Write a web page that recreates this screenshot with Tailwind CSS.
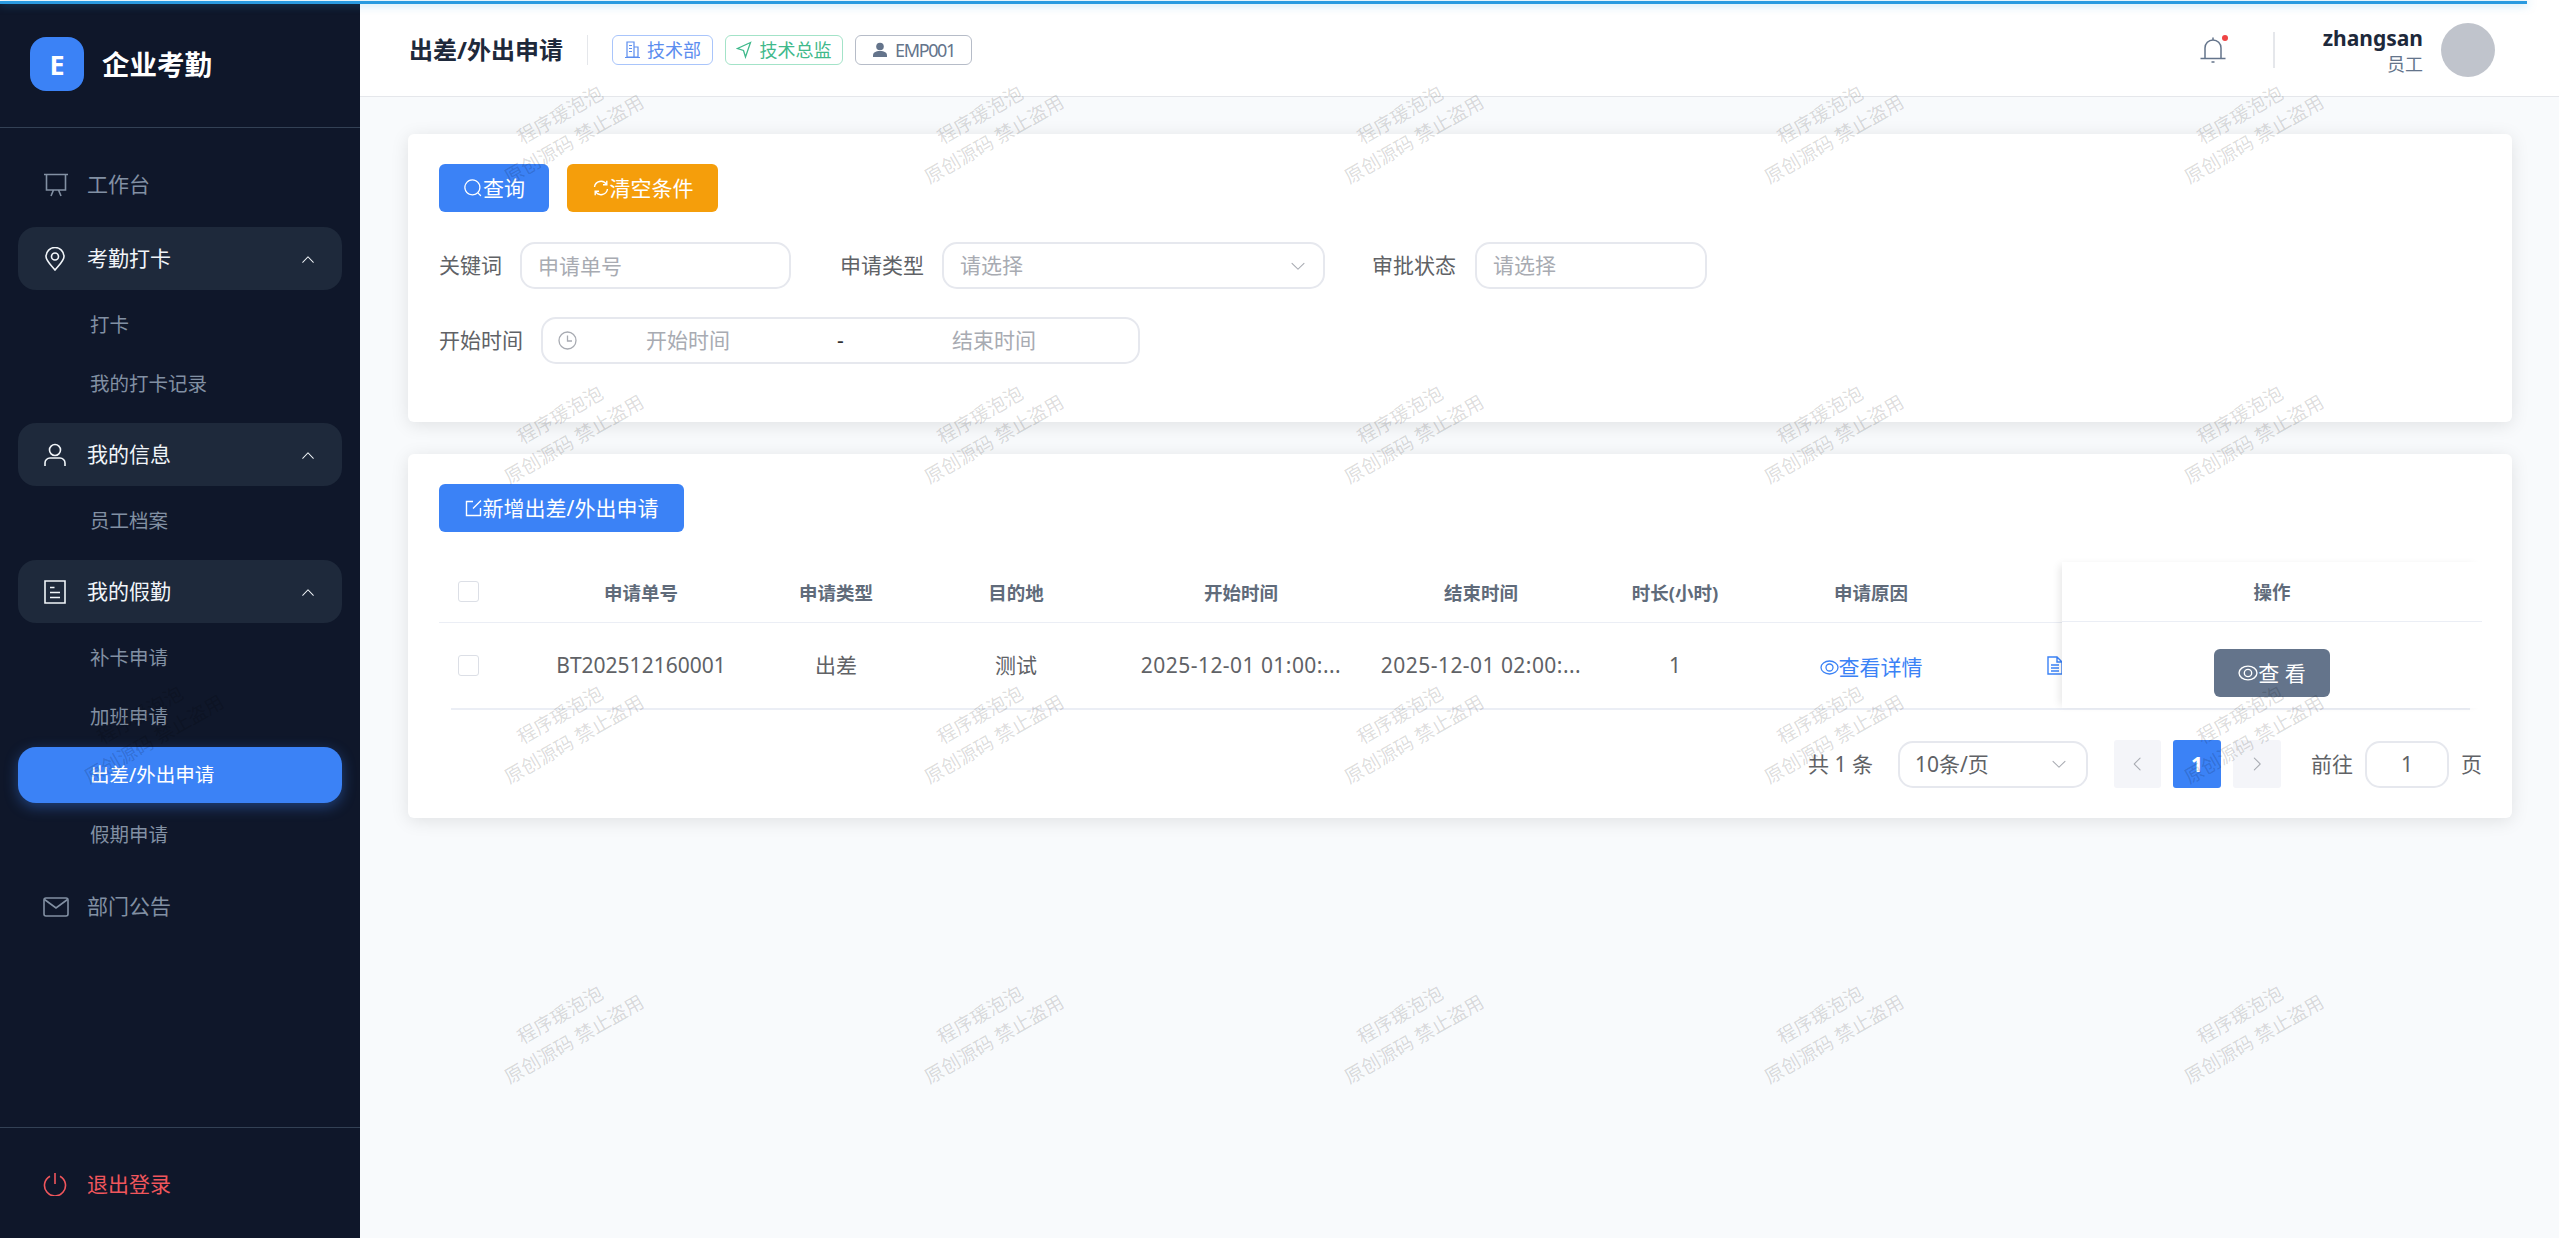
<!DOCTYPE html>
<html lang="zh-CN">
<head>
  <meta charset="UTF-8" />
  <meta name="viewport" content="width=device-width, initial-scale=1" />
  <title>出差/外出申请</title>
  <script src="https://cdn.jsdelivr.net/npm/@tailwindcss/browser@4"></script>
</head>
<body class="bg-[#f8fafc]">
<div class="relative w-[2559px] h-[1238px] overflow-hidden flex font-['Noto_Sans','Noto_Sans_CJK_SC',sans-serif] text-[21px] text-[#606266] leading-none">

  <!-- Sidebar -->
  <aside class="w-[360px] h-full shrink-0 flex flex-col bg-[#0f172a]">
    <div class="h-[128px] pt-px shrink-0 flex items-center pl-[30px] gap-[18px] border-b border-[#334155]">
      <div class="w-[54px] h-[54px] rounded-[16px] bg-[#3b82f6] flex items-center justify-center text-white text-[27px] font-bold">E</div>
      <span class="pt-[2px] text-white text-[27.5px] font-bold">企业考勤</span>
    </div>

    <nav class="pt-[25px] px-[18px] flex flex-col">
      <a class="h-[63px] flex items-center pl-[25px] gap-[20px] text-[#8290a3]">
        <svg class="w-[26px] h-[24px]" viewBox="0 0 26 24" fill="none" stroke="currentColor" stroke-width="1.6"><path d="M1 1.5H25M3.5 1.5V17H22.5V1.5M8 23L10.5 17M18 23L15.5 17"/></svg>
        <span class="-ml-[2px]">工作台</span>
      </a>

      <a class="mt-[11px] h-[63px] rounded-[18px] bg-[#1e293b] flex items-center pl-[25px] pr-[26px] gap-[20px] text-[#f1f5f9]">
        <svg class="w-[24px] h-[24px]" viewBox="0 0 24 24" fill="none" stroke="currentColor" stroke-width="1.6"><path d="M12 23C7 17 3 13.500 3 9.500a9 9 0 0 1 18 0C21 13.500 17 17 12 23z"/><circle cx="12" cy="9.500" r="3.500"/></svg>
        <span>考勤打卡</span>
        <svg class="ml-auto w-[16px] h-[16px]" viewBox="0 0 1024 1024" fill="currentColor"><path d="m488.832 344.32-339.84 356.672a32 32 0 0 0 0 44.16l.384.384a29.44 29.44 0 0 0 42.688 0l320-335.872 319.872 335.872a29.44 29.44 0 0 0 42.688 0l.384-.384a32 32 0 0 0 0-44.16L535.168 344.32a32 32 0 0 0-46.336 0"/></svg>
      </a>
      <a class="mt-[7px] h-[56px] flex items-center pl-[72px] text-[19.5px] text-[#8290a3]">打卡</a>
      <a class="mt-[3px] h-[56px] flex items-center pl-[72px] text-[19.5px] text-[#8290a3]">我的打卡记录</a>

      <a class="mt-[11px] h-[63px] rounded-[18px] bg-[#1e293b] flex items-center pl-[25px] pr-[26px] gap-[20px] text-[#f1f5f9]">
        <svg class="w-[24px] h-[24px]" viewBox="0 0 24 24" fill="none" stroke="currentColor" stroke-width="1.6"><circle cx="12" cy="7" r="5.500"/><path d="M2 23v-3a5 5 0 0 1 5-5h10a5 5 0 0 1 5 5v3"/></svg>
        <span>我的信息</span>
        <svg class="ml-auto w-[16px] h-[16px]" viewBox="0 0 1024 1024" fill="currentColor"><path d="m488.832 344.32-339.84 356.672a32 32 0 0 0 0 44.16l.384.384a29.44 29.44 0 0 0 42.688 0l320-335.872 319.872 335.872a29.44 29.44 0 0 0 42.688 0l.384-.384a32 32 0 0 0 0-44.16L535.168 344.32a32 32 0 0 0-46.336 0"/></svg>
      </a>
      <a class="mt-[7px] h-[56px] flex items-center pl-[72px] text-[19.5px] text-[#8290a3]">员工档案</a>

      <a class="mt-[11px] h-[63px] rounded-[18px] bg-[#1e293b] flex items-center pl-[25px] pr-[26px] gap-[20px] text-[#f1f5f9]">
        <svg class="w-[24px] h-[24px]" viewBox="0 0 24 24" fill="none" stroke="currentColor" stroke-width="1.600"><path d="M2 1h20v22H2zM7 7.500h4.500M7 12.500h10M7 17.500h10"/></svg>
        <span>我的假勤</span>
        <svg class="ml-auto w-[16px] h-[16px]" viewBox="0 0 1024 1024" fill="currentColor"><path d="m488.832 344.32-339.84 356.672a32 32 0 0 0 0 44.16l.384.384a29.44 29.44 0 0 0 42.688 0l320-335.872 319.872 335.872a29.44 29.44 0 0 0 42.688 0l.384-.384a32 32 0 0 0 0-44.16L535.168 344.32a32 32 0 0 0-46.336 0"/></svg>
      </a>
      <a class="mt-[7px] h-[56px] flex items-center pl-[72px] text-[19.5px] text-[#8290a3]">补卡申请</a>
      <a class="mt-[3px] h-[56px] flex items-center pl-[72px] text-[19.5px] text-[#8290a3]">加班申请</a>
      <a class="mt-[2px] h-[56px] mb-[1px] rounded-[18px] bg-[#3b82f6] shadow-[0_4px_14px_rgba(59,130,246,0.4)] flex items-center pl-[72px] text-[19.5px] text-white">出差/外出申请</a>
      <a class="mt-[3px] h-[56px] flex items-center pl-[72px] text-[19.5px] text-[#8290a3]">假期申请</a>

      <a class="mt-[12px] h-[63px] flex items-center pl-[25px] gap-[20px] text-[#8290a3]">
        <svg class="w-[26px] h-[22px]" viewBox="0 0 26 22" fill="none" stroke="currentColor" stroke-width="1.600"><rect x="1" y="2" width="24" height="18" rx="2"/><path d="M1.500 3.500L13 12L24.500 3.500"/></svg>
        <span class="-ml-[2px]">部门公告</span>
      </a>
    </nav>

    <div class="mt-auto h-[111px] pt-[2px] shrink-0 border-t border-[#334155] flex items-center pl-[43px] gap-[20px] text-[#f0565c]">
      <svg class="w-[24px] h-[24px]" viewBox="0 0 24 24" fill="none" stroke="currentColor" stroke-width="1.600"><path d="M12 1v11M7 4.200a10.500 10.500 0 1 0 10 0"/></svg>
      <span>退出登录</span>
    </div>
  </aside>

  <!-- Main -->
  <div class="flex-1 min-w-0 flex flex-col">
    <header class="h-[97px] pt-[4px] shrink-0 bg-white border-b border-[#e5e7eb] flex items-center pl-[49px] pr-[64px]">
      <h1 class="text-[24px] font-bold text-[#1e293b]">出差/外出申请</h1>
      <div class="w-px h-[30px] mx-[24px] bg-[#e5e7eb]"></div>
      <div class="flex items-center gap-[12px] text-[18px]">
        <span class="h-[30px] w-[101px] flex items-center justify-center gap-[7px] rounded-[6px] border border-[#a9c5fb] text-[#5b8def]">
          <svg class="w-[16px] h-[18px]" viewBox="0 0 16 18" fill="none" stroke="currentColor" stroke-width="1.200"><path d="M3 1h7v15H3zM10 6h4v10h-4M1 16.500h15M5 4.500h3M5 7.500h3M5 10.500h3"/></svg>
          <span>技术部</span>
        </span>
        <span class="h-[30px] w-[118px] flex items-center justify-center gap-[7px] rounded-[6px] border border-[#a3e3c8] text-[#3fb98b]">
          <svg class="w-[16px] h-[18px]" viewBox="0 0 16 18" fill="none" stroke="currentColor" stroke-width="1.300"><path d="M14.500 1.500L1.500 7.500L7.500 9.500L9.500 16z"/></svg>
          <span>技术总监</span>
        </span>
        <span class="h-[30px] w-[117px] flex items-center justify-center gap-[7px] rounded-[6px] border border-[#b6bcc8] text-[#64748b]">
          <svg class="w-[16px] h-[16px]" viewBox="0 0 16 16" fill="currentColor"><circle cx="8" cy="4.500" r="3.800"/><path d="M1 15v-1.500C1 10.500 3.500 9 8 9s7 1.500 7 4.500V15z"/></svg>
          <span class="text-[18px] tracking-[-1.4px]">EMP001</span>
        </span>
      </div>

      <div class="ml-auto flex items-center">
        <div class="relative">
          <svg class="w-[26px] h-[28px] text-[#64748b]" viewBox="0 0 26 28" fill="none" stroke="currentColor" stroke-width="1.500"><path d="M5 22V12a8 8 0 0 1 16 0v10M0.500 22.500H25.500M13 1.500V3.500M11.500 26h3"/></svg>
          <span class="absolute -top-[1px] -right-[2px] w-[6px] h-[6px] rounded-full bg-[#ef4444]"></span>
        </div>
        <div class="w-[2px] h-[36px] ml-[47px] mr-[48px] bg-[#e5e7eb]"></div>
        <div class="flex flex-col items-end gap-[6px]">
          <span class="font-bold text-[#1e293b]">zhangsan</span>
          <span class="text-[18px] text-[#64748b]">员工</span>
        </div>
        <div class="ml-[18px] w-[54px] h-[54px] rounded-full bg-[#c0c4cc]"></div>
      </div>
    </header>

    <main class="flex-1 pt-[37px] pl-[48px] pr-[47px]">
      <!-- Filter card -->
      <section class="h-[288px] pt-[30px] pl-[31px] pr-[30px] bg-white rounded-[6px] shadow-[0_3px_18px_rgba(0,0,0,0.1)]">
        <div class="flex gap-[18px]">
          <button class="w-[110px] h-[48px] rounded-[6px] bg-[#3b82f6] text-white flex items-center justify-center">
            <svg class="w-[20px] h-[20px]" viewBox="0 0 1024 1024" fill="currentColor"><path d="m795.904 750.72 124.992 124.928a32 32 0 0 1-45.248 45.248L750.656 795.904a416 416 0 1 1 45.248-45.248zM480 832a352 352 0 1 0 0-704 352 352 0 0 0 0 704"/></svg>
            <span>查询</span>
          </button>
          <button class="w-[151px] h-[48px] rounded-[6px] bg-[#f59e0b] text-white flex items-center justify-center">
            <svg class="w-[18px] h-[18px]" viewBox="0 0 18 18" fill="none" stroke="currentColor" stroke-width="1.400"><path d="M2.500 8a6.500 6.500 0 0 1 12-2.500M15.500 10a6.500 6.500 0 0 1-12 2.500M14.800 1.800V5.800H11M3.200 16.200V12.200H7"/></svg>
            <span>清空条件</span>
          </button>
        </div>

        <div class="mt-[30px] flex items-center">
          <label>关键词</label>
          <input class="ml-[18px] w-[271px] h-[47px] px-[16px] rounded-[15px] border-2 border-[#e6e8ee] outline-none placeholder:text-[#a8abb2]" placeholder="申请单号" />
          <label class="ml-[49px]">申请类型</label>
          <div class="ml-[18px] w-[383px] h-[47px] px-[16px] rounded-[15px] border-2 border-[#e6e8ee] flex items-center text-[#a8abb2]">
            <span>请选择</span>
            <svg class="ml-auto w-[18px] h-[18px]" viewBox="0 0 1024 1024" fill="currentColor"><path d="M831.872 340.864 512 652.672 192.128 340.864a30.592 30.592 0 0 0-42.752 0 29.12 29.12 0 0 0 0 41.6L489.664 714.24a32 32 0 0 0 44.672 0l340.288-331.712a29.12 29.12 0 0 0 0-41.728 30.592 30.592 0 0 0-42.752 0z"/></svg>
          </div>
          <label class="ml-[47px]">审批状态</label>
          <div class="ml-[19px] w-[232px] h-[47px] px-[16px] rounded-[15px] border-2 border-[#e6e8ee] flex items-center text-[#a8abb2]">
            <span>请选择</span>
          </div>
        </div>

        <div class="mt-[28px] flex items-center">
          <label>开始时间</label>
          <div class="ml-[18px] w-[599px] h-[47px] pl-[15px] rounded-[15px] border-2 border-[#e6e8ee] flex items-center text-[#a8abb2]">
            <svg class="w-[19px] h-[19px]" viewBox="0 0 19 19" fill="none" stroke="currentColor" stroke-width="1.300"><circle cx="9.500" cy="9.500" r="8.500"/><path d="M9.500 4.500V10H14"/></svg>
            <span class="ml-[69px]">开始时间</span>
            <span class="ml-[107px] w-[7px] text-center text-[#303133]">-</span>
            <span class="ml-[108px]">结束时间</span>
          </div>
        </div>
      </section>

      <!-- Table card -->
      <section class="mt-[32px] h-[364px] pt-[30px] pl-[31px] pr-[30px] bg-white rounded-[6px] shadow-[0_3px_18px_rgba(0,0,0,0.1)]">
        <button class="w-[245px] h-[48px] rounded-[6px] bg-[#3b82f6] text-white flex items-center justify-center">
          <svg class="w-[18px] h-[18px]" viewBox="0 0 18 18" fill="none" stroke="currentColor" stroke-width="1.400"><path d="M8 2.500H1.500V16.500H15.500V9M16 1.500L8 9.500"/></svg>
          <span>新增出差/外出申请</span>
        </button>

        <div class="mt-[30px] flex">
          <div class="w-[1623px] shrink-0 overflow-hidden">
            <table class="w-[1623px] table-fixed text-center">
              <colgroup>
                <col class="w-[86px]" /><col class="w-[232px]" /><col class="w-[158px]" /><col class="w-[202px]" /><col class="w-[248px]" /><col class="w-[232px]" /><col class="w-[156px]" /><col class="w-[236px]" /><col class="w-[73px]" />
              </colgroup>
              <thead>
                <tr class="h-[60px] border-b border-[#ebeef5] text-[18.5px] text-[#606b7a]">
                  <th class="pl-[19px] text-left"><span class="block w-[21px] h-[21px] rounded-[3px] border border-[#dcdfe6] bg-white"></span></th>
                  <th class="pt-[2px] font-bold">申请单号</th>
                  <th class="pt-[2px] font-bold">申请类型</th>
                  <th class="pt-[2px] font-bold">目的地</th>
                  <th class="pt-[2px] font-bold">开始时间</th>
                  <th class="pt-[2px] font-bold">结束时间</th>
                  <th class="pt-[2px] font-bold">时长(小时)</th>
                  <th class="pt-[2px] font-bold">申请原因</th>
                  <th></th>
                </tr>
              </thead>
              <tbody>
                <tr class="h-[86px]">
                  <td class="pl-[19px] text-left"><span class="block w-[21px] h-[21px] rounded-[3px] border border-[#dcdfe6] bg-white"></span></td>
                  <td>BT202512160001</td>
                  <td>出差</td>
                  <td>测试</td>
                  <td class="whitespace-nowrap tracking-[0.45px]">2025-12-01 01:00:...</td>
                  <td class="whitespace-nowrap tracking-[0.45px]">2025-12-01 02:00:...</td>
                  <td>1</td>
                  <td>
                    <span class="inline-flex items-center pt-[6px] text-[#3b82f6]">
                      <svg class="w-[19px] h-[19px]" viewBox="0 0 19 19" fill="none" stroke="currentColor" stroke-width="1.300"><ellipse cx="9.500" cy="9.500" rx="8.500" ry="6.500"/><circle cx="9.500" cy="9.500" r="3.500"/></svg>
                      <span>查看详情</span>
                    </span>
                  </td>
                  <td class="pl-[58px] text-left">
                    <svg class="w-[17px] h-[19px] text-[#3b82f6]" viewBox="0 0 17 19" fill="none" stroke="currentColor" stroke-width="1.400"><path d="M1 1h9l5 5v12H1zM10 1v5h5M4 9h8M4 12h8M4 15h8"/></svg>
                  </td>
                </tr>
              </tbody>
            </table>
          </div>
          <div class="w-[420px] shrink-0 bg-white shadow-[-5px_0_8px_-3px_rgba(0,0,0,0.1)]">
            <div class="h-[60px] pt-[2px] border-b border-[#ebeef5] flex items-center justify-center text-[18.5px] font-bold text-[#606b7a]">操作</div>
            <div class="h-[86px] pt-[16px] flex items-center justify-center">
              <button class="w-[116px] h-[48px] rounded-[6px] bg-[#64748b] text-white flex items-center justify-center">
                <svg class="w-[20px] h-[20px]" viewBox="0 0 19 19" fill="none" stroke="currentColor" stroke-width="1.300"><ellipse cx="9.500" cy="9.500" rx="8.500" ry="6.500"/><circle cx="9.500" cy="9.500" r="3.500"/></svg>
                <span>查 看</span>
              </button>
            </div>
          </div>
        </div>
        <div class="h-[2px] mx-[12px] bg-[#ebeef5]"></div>

        <div class="mt-[30px] flex items-center justify-end">
          <span>共 1 条</span>
          <div class="ml-[25px] w-[190px] h-[47px] pl-[15px] pr-[18px] rounded-[15px] border-2 border-[#e6e8ee] flex items-center">
            <span>10条/页</span>
            <svg class="ml-auto w-[18px] h-[18px] text-[#a8abb2]" viewBox="0 0 1024 1024" fill="currentColor"><path d="M831.872 340.864 512 652.672 192.128 340.864a30.592 30.592 0 0 0-42.752 0 29.12 29.12 0 0 0 0 41.6L489.664 714.24a32 32 0 0 0 44.672 0l340.288-331.712a29.12 29.12 0 0 0 0-41.728 30.592 30.592 0 0 0-42.752 0z"/></svg>
          </div>
          <div class="ml-[26px] w-[47px] h-[48px] rounded-[3px] bg-[#f4f5f9] flex items-center justify-center text-[#a8abb2]">
            <svg class="w-[18px] h-[18px]" viewBox="0 0 1024 1024" fill="currentColor"><path d="M609.408 149.376 277.76 489.6a32 32 0 0 0 0 44.672l331.648 340.352a29.12 29.12 0 0 0 41.728 0 30.592 30.592 0 0 0 0-42.752L339.2 512l312.96-319.872a30.592 30.592 0 0 0 0-42.752 29.12 29.12 0 0 0-41.728 0z"/></svg>
          </div>
          <div class="ml-[12px] w-[48px] h-[48px] rounded-[3px] bg-[#3b82f6] flex items-center justify-center text-white font-bold">1</div>
          <div class="ml-[12px] w-[48px] h-[48px] rounded-[3px] bg-[#f4f5f9] flex items-center justify-center text-[#a8abb2]">
            <svg class="w-[18px] h-[18px]" viewBox="0 0 1024 1024" fill="currentColor"><path d="M340.864 149.312a30.592 30.592 0 0 0 0 42.752L652.736 512 340.864 831.872a30.592 30.592 0 0 0 0 42.752 29.12 29.12 0 0 0 41.728 0L714.24 534.336a32 32 0 0 0 0-44.672L382.592 149.376a29.12 29.12 0 0 0-41.728 0z"/></svg>
          </div>
          <span class="ml-[30px]">前往</span>
          <input class="ml-[12px] w-[84px] h-[47px] rounded-[15px] border-2 border-[#e6e8ee] text-center outline-none" value="1" />
          <span class="ml-[12px]">页</span>
        </div>
      </section>
    </main>
  </div>

  <!-- Watermark -->
  <div id="watermark" class="absolute left-[-63px] top-[-23px] grid grid-cols-[repeat(6,420px)] grid-rows-[repeat(4,300px)] pointer-events-none"></div>

  <!-- Route progress bar -->
  <div class="absolute left-0 top-0 w-full h-[4px] bg-white">
    <div class="mt-px w-[2527px] h-[3px] bg-[#2a9ae0] shadow-[0_0_10px_rgba(42,154,224,0.5)]"></div>
  </div>
</div>

<script>
  const wm = document.getElementById('watermark');
  for (let i = 0; i < 24; i++) {
    // on the dark sidebar it only shows across the blue active item
    const hidden = i % 6 === 0 && i !== 12;
    wm.innerHTML += hidden ? '<div></div>' : '<div class="flex flex-col items-center justify-center gap-[9px] -rotate-30 text-[19px] text-black/15 whitespace-nowrap"><span>程序瑗泡泡</span><span>原创源码 禁止盗用</span></div>';
  }
</script>
</body>
</html>
